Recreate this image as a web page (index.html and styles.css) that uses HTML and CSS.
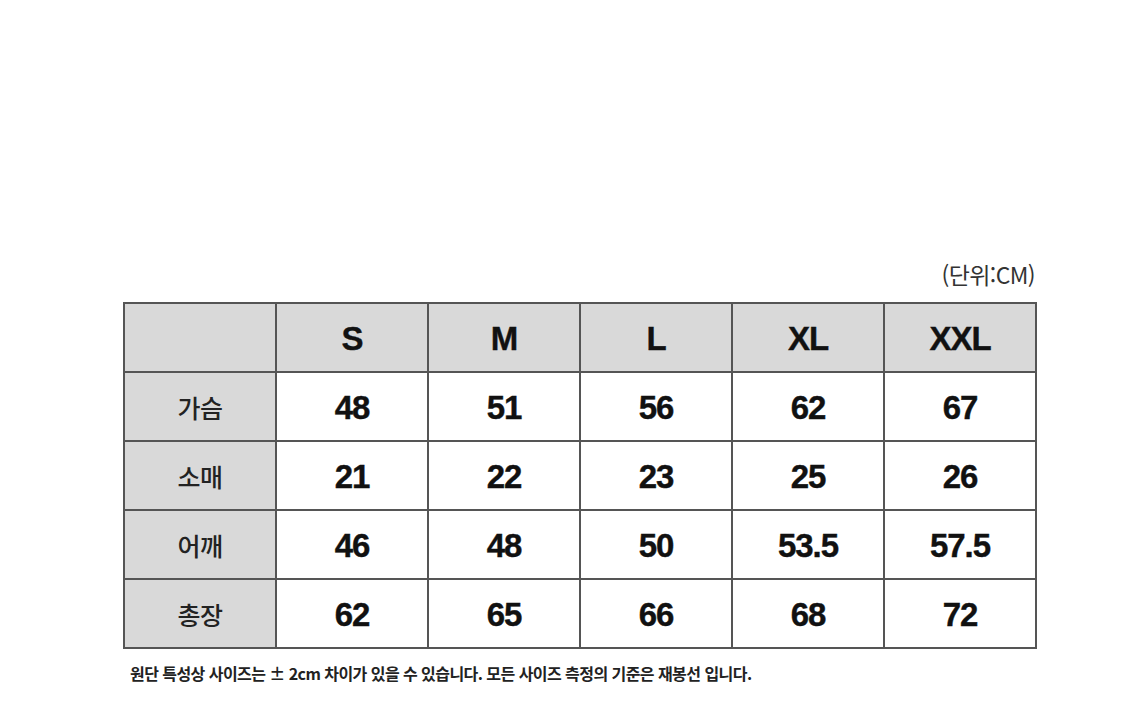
FILE: index.html
```html
<!DOCTYPE html>
<html lang="ko">
<head>
<meta charset="utf-8">
<link rel="stylesheet" href="styles.css">
</head>
<body>
<main class="page">
  <div class="unit">(단위:CM)</div>
  <div class="size-table">
    <div class="cell head"></div>
    <div class="cell head size">S</div>
    <div class="cell head size">M</div>
    <div class="cell head size">L</div>
    <div class="cell head size">XL</div>
    <div class="cell head size">XXL</div>

    <div class="cell label">가슴</div>
    <div class="cell val">48</div>
    <div class="cell val">51</div>
    <div class="cell val">56</div>
    <div class="cell val">62</div>
    <div class="cell val">67</div>

    <div class="cell label">소매</div>
    <div class="cell val">21</div>
    <div class="cell val">22</div>
    <div class="cell val">23</div>
    <div class="cell val">25</div>
    <div class="cell val">26</div>

    <div class="cell label">어깨</div>
    <div class="cell val">46</div>
    <div class="cell val">48</div>
    <div class="cell val">50</div>
    <div class="cell val">53.5</div>
    <div class="cell val">57.5</div>

    <div class="cell label">총장</div>
    <div class="cell val">62</div>
    <div class="cell val">65</div>
    <div class="cell val">66</div>
    <div class="cell val">68</div>
    <div class="cell val">72</div>
  </div>
  <p class="note">원단 특성상 사이즈는 ± 2cm 차이가 있을 수 있습니다. 모든 사이즈 측정의 기준은 재봉선 입니다.</p>
</main>
</body>
</html>
```

FILE: styles.css
```css
html, body {
  margin: 0;
  padding: 0;
  background: #ffffff;
}

body {
  font-family: "Noto Sans CJK KR", "Liberation Sans", sans-serif;
  color: #111;
}

.page {
  width: 914px;
  margin-left: 123px;
  padding-top: 259px;
  display: flex;
  flex-direction: column;
}

.unit {
  align-self: flex-end;
  margin-right: 2px;
  font-size: 23px;
  line-height: 30px;
  font-weight: 400;
  color: #333;
  letter-spacing: -0.6px;
  margin-bottom: 13px;
}

.size-table {
  display: grid;
  grid-template-columns: repeat(6, 150px);
  grid-auto-rows: 67px;
  gap: 2px;
  padding: 2px;
  background: #555;
}

.cell {
  display: flex;
  align-items: center;
  justify-content: center;
  background: #fff;
}

.head {
  background: #d9d9d9;
}

.size, .val {
  font-family: "Liberation Sans", "Noto Sans CJK KR", sans-serif;
  font-weight: 700;
  font-size: 33px;
  color: #111;
  letter-spacing: -1px;
  padding-top: 2px;
  -webkit-text-stroke: 0.4px #111;
}

.label {
  background: #d9d9d9;
  font-size: 25px;
  font-weight: 500;
  color: #222;
  letter-spacing: -0.5px;
}

.note {
  margin: 14px 0 0 7px;
  font-size: 16px;
  line-height: 20px;
  font-weight: 700;
  color: #222;
  letter-spacing: -0.55px;
}
```
